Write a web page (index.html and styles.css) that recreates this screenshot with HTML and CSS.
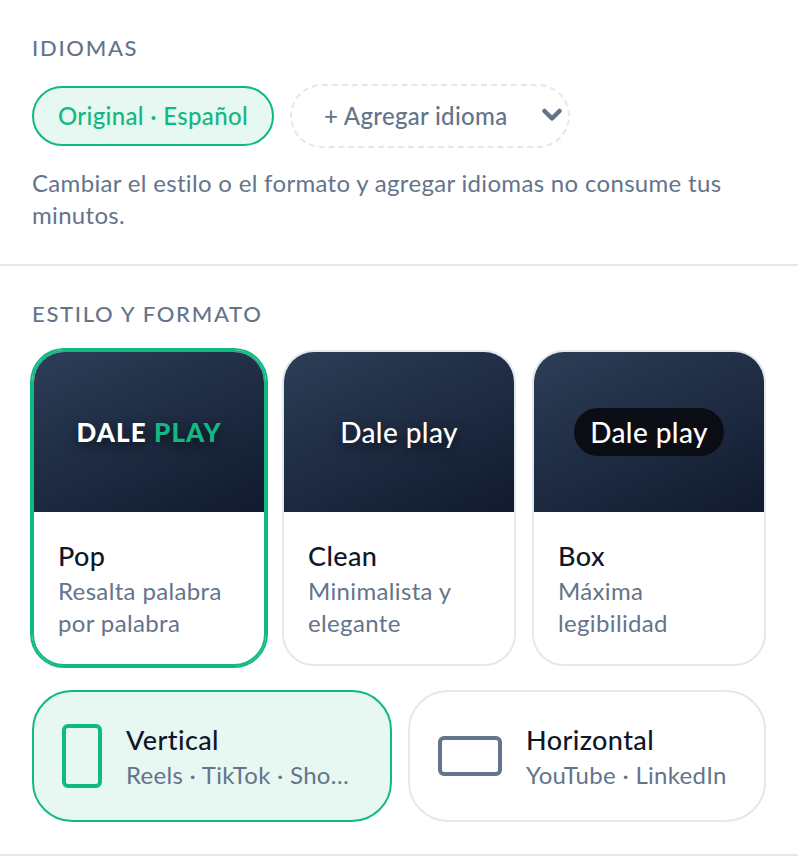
FILE: index.html
```html
<!DOCTYPE html>
<html lang="es">
<head>
<meta charset="utf-8">
<title>Idiomas y estilo</title>
<link rel="stylesheet" href="styles.css">
</head>
<body>
<section class="section langs">
  <h2 class="label">IDIOMAS</h2>
  <div class="lang-row">
    <span class="pill-active">Original · Español</span>
    <div class="pill-add">
      <span class="add-text">+ Agregar idioma</span>
      <svg class="chev" width="20" height="14" viewBox="0 0 20 14"><path d="M2.5 3l7.5 7.5L17.500 3" fill="none" stroke="#64748b" stroke-width="4.500" stroke-linecap="round" stroke-linejoin="round"/></svg>
    </div>
  </div>
  <p class="note">Cambiar el estilo o el formato y agregar idiomas no consume tus minutos.</p>
</section>
<section class="section style">
  <h2 class="label">ESTILO Y FORMATO</h2>
  <div class="cards">
    <div class="card selected">
      <div class="thumb"><span class="t-pop">DALE <em>PLAY</em></span></div>
      <div class="card-body"><div class="card-title">Pop</div><div class="card-desc">Resalta palabra por palabra</div></div>
    </div>
    <div class="card">
      <div class="thumb"><span class="t-clean">Dale play</span></div>
      <div class="card-body"><div class="card-title">Clean</div><div class="card-desc">Minimalista y elegante</div></div>
    </div>
    <div class="card">
      <div class="thumb"><span class="t-box">Dale play</span></div>
      <div class="card-body"><div class="card-title">Box</div><div class="card-desc">Máxima legibilidad</div></div>
    </div>
  </div>
  <div class="formats">
    <div class="format on">
      <span class="ico-v"></span>
      <div class="f-text"><div class="f-title">Vertical</div><div class="f-desc">Reels · TikTok · Shorts</div></div>
    </div>
    <div class="format">
      <span class="ico-h"></span>
      <div class="f-text"><div class="f-title">Horizontal</div><div class="f-desc">YouTube · LinkedIn</div></div>
    </div>
  </div>
</section>
</body>
</html>
```
FILE: styles.css
```css
* { box-sizing: border-box; }
html, body { margin: 0; padding: 0; background: #fff; }
body { width: 798px; height: 856px; overflow: hidden; font-family: "Lato", "Noto Sans", sans-serif; color: #64748b; }
.section { padding: 0 32px; border-bottom: 2px solid #e2e8f0; }
.langs { height: 266px; padding-top: 35px; }
.style { height: 590px; padding-top: 35px; }
.label { margin: 0; font-size: 22px; line-height: 26px; font-weight: 500; letter-spacing: 1.7px; color: #64748b; }
.lang-row { display: flex; align-items: center; gap: 16px; margin-top: 23px; }
.pill-active { display: flex; align-items: center; height: 60px; padding: 0 24px 2px; border: 2px solid #10b981; border-radius: 30px; background: #e7f7f1; color: #10b981; font-size: 24px; font-weight: 500; letter-spacing: .33px; }
.pill-add { display: flex; align-items: center; width: 280px; height: 64px; padding: 0 6px 2px 32px; border: 2px dashed #e2e8f0; border-radius: 32px; font-size: 24px; font-weight: 500; letter-spacing: .3px; justify-content: space-between; }
.note { margin: 19px 0 0; font-size: 24px; line-height: 32px; letter-spacing: .32px; }
.cards { display: flex; gap: 16px; margin-top: 23px; }
.card { width: 234px; height: 316px; border: 2px solid #e2e8f0; border-radius: 32px; overflow: hidden; display: flex; flex-direction: column; }
.card.selected { border-color: #10b981; box-shadow: 0 0 0 2px #10b981; }
.thumb { height: 160px; flex: none; display: flex; align-items: center; justify-content: center; background: linear-gradient(155deg, #2c3e57, #111a2e); color: #fff; }
.t-pop { font-size: 26px; font-weight: 900; letter-spacing: 1.1px; text-shadow: 0 4px 12px rgba(0,0,0,.6); }
.t-pop em { font-style: normal; color: #10b981; }
.t-clean { font-size: 28px; font-weight: 500; letter-spacing: .4px; text-shadow: 0 4px 12px rgba(0,0,0,.6); }
.t-box { font-size: 28px; font-weight: 500; letter-spacing: .4px; background: #0a0d14; padding: 0 16px; height: 48px; line-height: 48px; border-radius: 24px; }
.card-body { padding: 27px 24px 0; }
.card-title { font-size: 27px; line-height: 34px; font-weight: 500; letter-spacing: .4px; color: #0f172a; }
.card-desc { font-size: 24px; line-height: 32px; letter-spacing: .35px; margin-top: 2px; }
.formats { display: flex; gap: 16px; margin-top: 24px; }
.format { display: flex; align-items: center; width: 358px; height: 132px; border: 2px solid #e2e8f0; border-radius: 40px; padding-left: 28px; gap: 24px; min-width: 0; }
.format.on { width: 360px; border-color: #10b981; background: #e7f7f1; }
.ico-v { flex: none; width: 40px; height: 64px; border: 4px solid #10b981; border-radius: 6px; }
.ico-h { flex: none; width: 64px; height: 40px; border: 4px solid #64748b; border-radius: 6px; }
.f-text { min-width: 0; flex: 1; padding: 2px 34px 0 0; }
.f-title { font-size: 27px; line-height: 34px; font-weight: 500; letter-spacing: .4px; color: #0f172a; }
.f-desc { font-size: 24px; line-height: 32px; letter-spacing: .3px; white-space: nowrap; overflow: hidden; text-overflow: ellipsis; margin-top: 2px; }
```
